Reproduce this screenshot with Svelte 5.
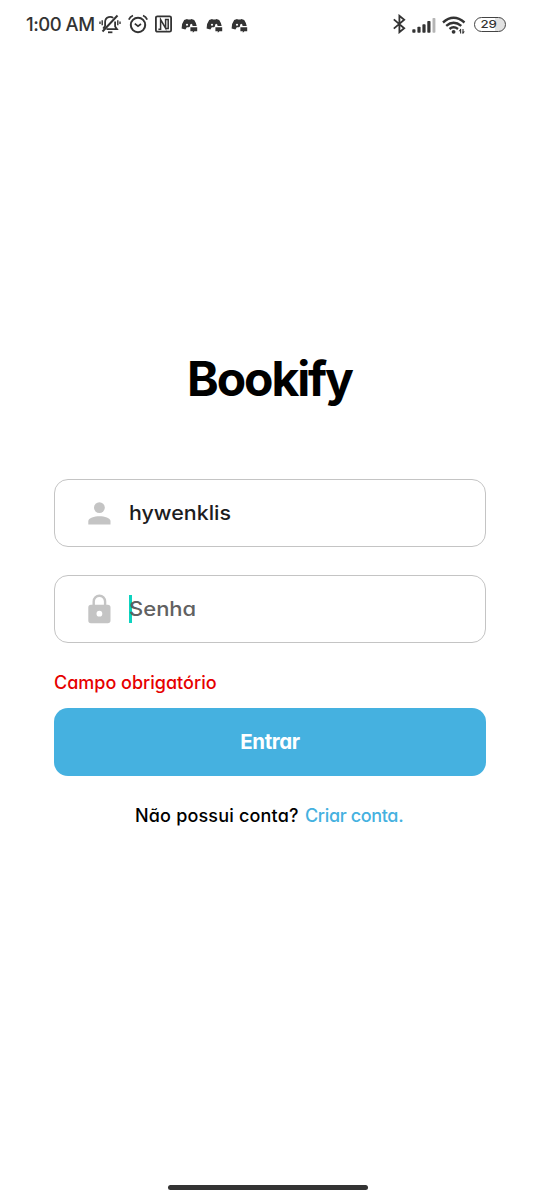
<script>
  let username = 'hywenklis';
  const notifications = [0, 1, 2];
</script>

<main class="screen">
  <header class="status">
    <span class="time">1:00 AM</span>
    <svg class="bell" width="22" height="20" viewBox="0 0 22 20" fill="none" stroke="#333" stroke-width="1.8">
      <path d="M7.5 15.2H18L16.1 12.4V7.5M14.2 3.9Q12.3 2.4 9.6 3.1Q6.2 4.1 6.1 8V12L4.2 14.6" />
      <path d="M3.5 17.5L18.5 1.5" stroke-width="2" />
      <path d="M9 18.3h4.4" />
      <path d="M3.2 6.3v5M1 7.5v2.6M18.8 6.3v5M21 7.5v2.6" stroke-width="1.4" />
    </svg>
    <svg class="alarm" width="20" height="20" viewBox="0 0 20 20" fill="none" stroke="#333" stroke-width="2">
      <circle cx="10" cy="11" r="7.2" />
      <path d="M6.8 9.6L10 12.2L13 10" stroke-width="1.7" />
      <path d="M.8 5.6Q2 2.6 5 1.5M19.2 5.6Q18 2.6 15 1.5" stroke-width="1.8" />
    </svg>
    <svg class="nfc" width="17" height="18" viewBox="0 0 17 18" fill="none" stroke="#333" stroke-width="1.8">
      <rect x=".9" y="1.3" width="15.2" height="15.4" rx="1.5" />
      <path d="M3.4 14.2H5.6V4.6L10.6 13.2V4.4H13.2V13.6H10.4" stroke-width="1.5" />
    </svg>
    {#each notifications as item (item)}
      <svg class="note" width="17" height="15" viewBox="0 0 17 15">
        <path d="M3.2 2L6 1L7 1.6H9.5L10.5 1L13.2 2Q15 4.5 15.7 8H9.3L8 9.2H5.8L4.4 11.6L.6 10.4Q.6 5.3 3.2 2Z" fill="#333" />
        <path d="M9.4 9.2H16.2V13.2H13.4L11.8 14.8V13.2H9.4Z" fill="#333" />
        <ellipse cx="6" cy="6.8" rx="1.1" ry="1" fill="#fff" />
        <path d="M9 8.3Q8.8 5.8 10.3 5.8Q11.6 5.8 11.6 8.3Z" fill="#fff" />
      </svg>
    {/each}
    <span class="spacer"></span>
    <svg class="bt" width="14" height="20" viewBox="0 0 14 20" fill="none" stroke="#333" stroke-width="1.8">
      <path d="M1.8 5.4L12.2 14.2L7.4 18.2V1.8L12.2 5.8L1.8 14.6" />
    </svg>
    <svg class="signal" width="24" height="16" viewBox="0 0 24 16" fill="#333">
      <rect x=".3" y="11.3" width="3.2" height="3.4" rx=".8" />
      <rect x="5.4" y="8.8" width="3.2" height="5.9" rx=".8" />
      <rect x="10.4" y="6.2" width="3.2" height="8.5" rx=".8" />
      <rect x="15.3" y="3" width="3.2" height="11.7" rx=".8" />
      <rect x="20.5" y="0" width="2.9" height="14.7" rx=".8" fill="#b5b5b5" />
    </svg>
    <svg class="wifi" width="24" height="19" viewBox="0 0 24 19" fill="none" stroke="#333" stroke-width="2.4">
      <path d="M1 6.5Q11.5-2.8 22.5 6.5M4.2 9.9Q11.5 3.7 19.3 9.9M7.5 13Q11.5 9.6 16 13" />
      <circle cx="11.6" cy="15.8" r="1.9" fill="#333" stroke="none" />
      <path d="M18.6 13v4.6M21 13v4.6" stroke-width="1.1" />
      <path d="M16.6 15.3L19 12.6V15.3ZM20.6 15.4H23L20.6 18Z" fill="#333" stroke="none" />
    </svg>
    <span class="battery"><b>29</b></span>
  </header>

  <h1>Bookify</h1>

  <form class="login" onsubmit={(event) => event.preventDefault()}>
    <div class="field">
      <svg width="24" height="24" viewBox="0 0 24 24" fill="#c4c4c4">
        <circle cx="12.4" cy="6.6" r="5.4" />
        <path d="M1.3 23.6V20.1C1.3 16.8 7.4 15.2 12.4 15.2S23.5 16.8 23.5 20.1V23.6Z" />
      </svg>
      <span class="value user">{username}</span>
    </div>
    <div class="field">
      <svg class="lock" width="24" height="30" viewBox="0 0 24 30">
        <path d="M6.7 12V7.5a5.7 5.7 0 0 1 11.4 0V12" fill="none" stroke="#c4c4c4" stroke-width="2.4" />
        <path fill-rule="evenodd" fill="#c4c4c4" d="M4 10.8H20.8Q23.5 10.8 23.5 13.5V26.6Q23.5 29.3 20.8 29.3H4Q1.3 29.3 1.3 26.6V13.5Q1.3 10.8 4 10.8ZM12.4 16.8a2.9 2.9 0 1 0 0 5.8a2.9 2.9 0 1 0 0-5.8Z" />
      </svg>
      <span class="value placeholder"><i class="caret"></i><span class="hint">Senha</span></span>
    </div>
    <p class="error">Campo obrigatório</p>
    <button type="submit">Entrar</button>
  </form>

  <p class="signup"><span class="ask">Não possui conta?</span><span class="link">Criar conta.</span></p>
  <div class="home"></div>
</main>

<style>
  :global(body) { margin: 0; background: #fff; }
  .screen {
    box-sizing: border-box;
    width: 540px;
    height: 1200px;
    overflow: hidden;
    background: #fff;
    display: flex;
    flex-direction: column;
    font-family: Inter, "Open Sans", sans-serif;
    font-feature-settings: "cv11";
    color: #000;
  }
  .status {
    box-sizing: border-box;
    height: 48px;
    padding: 0 34px 0 26px;
    display: flex;
    align-items: center;
    color: #333;
    flex: none;
  }
  .status svg { flex: none; display: block; }
  .time { width: 73px; font-size: 18.5px; letter-spacing: -0.5px; white-space: nowrap; font-weight: 450; }
  .alarm { margin-left: 7px; }
  .nfc { margin-left: 7px; }
  .note { margin-left: 8px; margin-top: 2px; }
  .nfc + .note { margin-left: 9px; }
  .spacer { flex: 1; }
  .signal { margin-left: 6px; margin-top: 3px; }
  .wifi { margin-left: 6px; margin-top: 2px; }
  .battery {
    box-sizing: border-box;
    width: 32px;
    height: 15px;
    margin-left: 8px;
    border: 1.5px solid #444;
    border-radius: 8px;
    background: linear-gradient(90deg, #fff 68%, #e2e2e2 68%);
    font-size: 11px;
    line-height: 13px;
    text-align: center;
  }
  .battery b { display: inline-block; font-weight: 500; transform: scaleX(1.2) translateX(-1px); }
  h1 {
    margin: 301px 0 0;
    height: 60px;
    line-height: 60px;
    text-align: center;
    font-size: 48px;
    font-weight: 700;
    letter-spacing: -2.1px;
    text-indent: -1px;
    flex: none;
  }
  .login { margin: 70px 54px 0; flex: none; }
  .field {
    box-sizing: border-box;
    height: 68px;
    padding-left: 32px;
    display: flex;
    align-items: center;
    gap: 18px;
    border: 1.4px solid #c4c4c4;
    border-radius: 14px;
  }
  .field + .field { margin-top: 28px; }
  .value { font-size: 20px; line-height: 28px; font-weight: 500; color: #1c1c1e; white-space: nowrap; }
  .user, .hint { display: inline-block; transform-origin: left; }
  .user { transform: scaleX(1.07); }
  .hint { transform: scaleX(1.1); }
  .placeholder { position: relative; z-index: 0; color: #616161; }
  .caret { position: absolute; left: 0; top: 0; width: 3px; height: 28px; background: #0dd3c0; z-index: -1; }
  .error { margin: 28px 0 0; height: 24px; line-height: 24px; font-size: 18px; font-weight: 500; color: #e60000; }
  button {
    display: block;
    width: 432px;
    height: 68px;
    margin-top: 13px;
    padding: 0 0 1px;
    border: 0;
    border-radius: 14px;
    background: #45b1e0;
    color: #fff;
    font: inherit;
    font-feature-settings: inherit;
    font-size: 20.5px;
    font-weight: 700;
    letter-spacing: -0.4px;
  }
  .signup { margin: 28px 0 0 135px; height: 24px; line-height: 24px; display: flex; font-size: 18px; font-weight: 500; white-space: nowrap; flex: none; }
  .ask { width: 170px; letter-spacing: 0.18px; }
  .link { color: #45b1e0; letter-spacing: -0.35px; }
  .home { width: 200px; height: 5px; margin: auto 172px 10px 168px; border-radius: 3px; background: #333; flex: none; }
</style>
